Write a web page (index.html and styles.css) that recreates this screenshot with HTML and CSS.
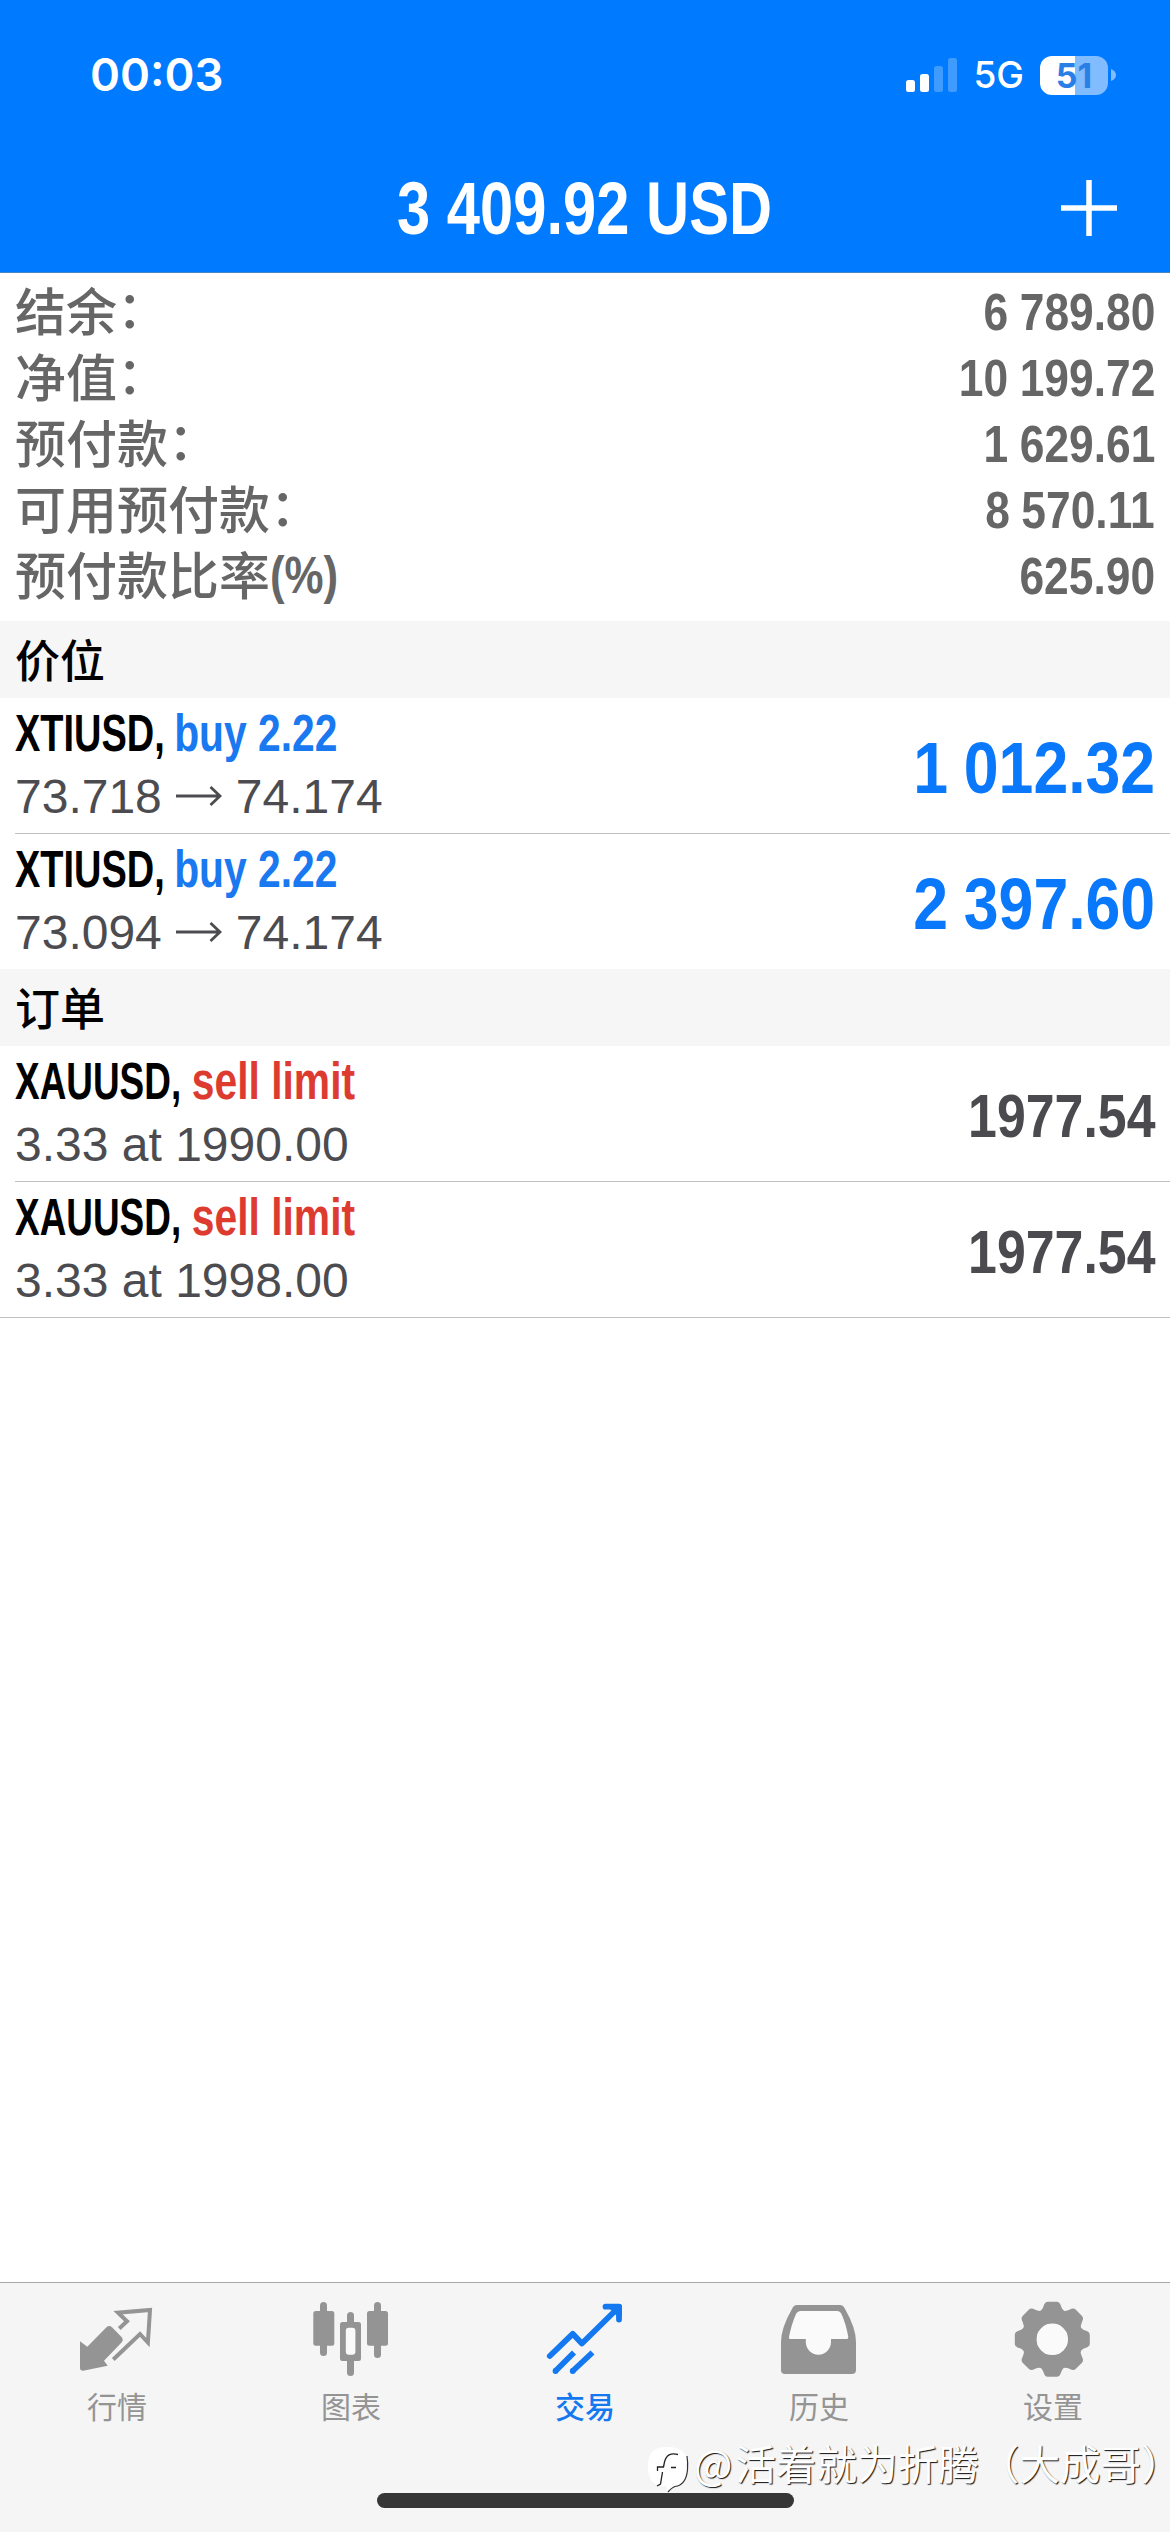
FILE: index.html
```html
<!DOCTYPE html>
<html lang="zh-CN">
<head>
<meta charset="utf-8">
<title>交易</title>
<link rel="stylesheet" href="styles.css">
</head>
<body>
<div class="app">
  <header class="header">
    <div class="status">
      <span class="time">00:03</span>
      <div class="status-icons">
        <svg class="signal" width="52" height="36" viewBox="0 0 52 36" fill="#fff">
          <rect x="0" y="23" width="9" height="12" rx="2.5"/>
          <rect x="14" y="17" width="9" height="18" rx="2.5"/>
          <rect x="28" y="9" width="9" height="26" rx="2.5" opacity=".25"/>
          <rect x="42" y="1" width="9" height="34" rx="2.5" opacity=".25"/>
        </svg>
        <span class="network">5G</span>
        <div class="battery"><span class="battery-level">51</span></div>
        <svg width="6" height="12" viewBox="0 0 6 12"><path d="M0 0Q5 2 5 6T0 12Z" fill="#80bcff"/></svg>
      </div>
    </div>
    <div class="titlebar">
      <h1 class="title">3 409.92 USD</h1>
      <svg class="add" width="56" height="56" viewBox="0 0 56 56"><path d="M28 0V56M0 28H56" stroke="#fff" stroke-width="5.5"/></svg>
    </div>
  </header>

  <main class="content">
    <dl class="summary">
      <div class="summary-row"><dt>结余<span class="colon">：</span></dt><dd>6 789.80</dd></div>
      <div class="summary-row"><dt>净值<span class="colon">：</span></dt><dd>10 199.72</dd></div>
      <div class="summary-row"><dt>预付款<span class="colon">：</span></dt><dd>1 629.61</dd></div>
      <div class="summary-row"><dt>可用预付款<span class="colon">：</span></dt><dd>8 570.11</dd></div>
      <div class="summary-row"><dt>预付款比率<span class="unit">(%)</span></dt><dd>625.90</dd></div>
    </dl>

    <h2 class="section">价位</h2>
    <div class="row">
      <div class="info">
        <div class="name"><span class="symbol oil">XTIUSD,</span><span class="buy">buy 2.22</span></div>
        <div class="detail">73.718<svg class="arrow" width="46" height="20" viewBox="0 0 46 20"><path d="M0 10H44M34.500 1L44 10L34.500 19" fill="none" stroke="#4c4c50" stroke-width="2.800"/></svg>74.174</div>
      </div>
      <div class="profit">1 012.32</div>
    </div>
    <div class="row">
      <div class="info">
        <div class="name"><span class="symbol oil">XTIUSD,</span><span class="buy">buy 2.22</span></div>
        <div class="detail">73.094<svg class="arrow" width="46" height="20" viewBox="0 0 46 20"><path d="M0 10H44M34.500 1L44 10L34.500 19" fill="none" stroke="#4c4c50" stroke-width="2.800"/></svg>74.174</div>
      </div>
      <div class="profit">2 397.60</div>
    </div>

    <h2 class="section">订单</h2>
    <div class="row">
      <div class="info">
        <div class="name"><span class="symbol gold">XAUUSD,</span><span class="sell">sell limit</span></div>
        <div class="detail">3.33 at 1990.00</div>
      </div>
      <div class="price">1977.54</div>
    </div>
    <div class="row">
      <div class="info">
        <div class="name"><span class="symbol gold">XAUUSD,</span><span class="sell">sell limit</span></div>
        <div class="detail">3.33 at 1998.00</div>
      </div>
      <div class="price">1977.54</div>
    </div>
    <div class="list-end"></div>
  </main>

  <nav class="tabs">
    <div class="tab">
      <svg width="84" height="84" viewBox="0 0 84 84" fill="currentColor">
        <path d="M5 43.300L12.300 48.700L31.500 29.200Q34.300 26.700 37 29.200L47 39.500Q48.500 41.500 47 44L29 62.700L32.700 67.700L8 72.700Q5 72.700 5 70Z"/>
        <path d="M44.300 30.500L52 23.300L43 14.700L75 12L72.900 44.500L65 36L38.300 61.500" fill="none" stroke="currentColor" stroke-width="4"/>
      </svg>
      <span>行情</span>
    </div>
    <div class="tab">
      <svg width="84" height="84" viewBox="0 0 84 84" fill="currentColor">
        <rect x="11" y="4" width="7" height="54" rx="3.500"/><rect x="4.300" y="13" width="21" height="34.700" rx="2.500"/>
        <rect x="65" y="4" width="7" height="56" rx="3.500"/><rect x="58" y="13" width="21" height="34.700" rx="2.500"/>
        <rect x="38" y="14" width="7" height="64" rx="3.500"/><rect x="31" y="24" width="21" height="39" rx="2.500"/>
        <rect x="36.800" y="29.700" width="9.600" height="27" rx="3" fill="#fafafa"/>
      </svg>
      <span>图表</span>
    </div>
    <div class="tab active">
      <svg width="84" height="84" viewBox="0 0 84 84" fill="none" stroke="currentColor" stroke-width="5.800" stroke-linejoin="round">
        <path d="M6.800 58L29.700 35.800L38.900 45.500L76 9" stroke-linecap="round"/>
        <path d="M62.500 8.700H76V21.500" stroke-linecap="round"/>
        <path d="M69 9H76V16Z" fill="currentColor"/>
        <path d="M12.500 73L31 54.500M29.700 73L49.500 54.500"/>
        <path d="M12.500 73h.1M29.700 73h.1" stroke-linecap="round"/>
      </svg>
      <span>交易</span>
    </div>
    <div class="tab">
      <svg width="84" height="84" viewBox="0 0 84 84">
        <path d="M20 7H63Q66 7 67.500 10Q79 30 79 44V72Q79 76 75 76H8Q4 76 4 72V44Q4 30 15.500 10Q17 7 20 7Z" fill="currentColor"/>
        <path d="M24 13H60Q63 13 64.500 16Q69 26 71.300 39Q71.300 41 70 41H54V44C54 51 48.500 56.700 41.400 56.700S28.800 51 28.800 44V41H13Q11.600 41 12 39Q14.500 26 19 16Q20.500 13 24 13Z" fill="#fafafa"/>
      </svg>
      <span>历史</span>
    </div>
    <div class="tab">
      <svg width="84" height="84" viewBox="0 0 84 84" fill="currentColor">
        <defs><path id="tooth" d="M-14 -27Q-10 -29 -8.800 -33Q-7.500 -37.500 -4.500 -37.500H4.500Q7.500 -37.500 8.800 -33Q10 -29 14 -27L8 -15H-8Z"/></defs>
        <g transform="translate(41.300 41.300)">
          <use href="#tooth"/><use href="#tooth" transform="rotate(45)"/><use href="#tooth" transform="rotate(90)"/><use href="#tooth" transform="rotate(135)"/>
          <use href="#tooth" transform="rotate(180)"/><use href="#tooth" transform="rotate(225)"/><use href="#tooth" transform="rotate(270)"/><use href="#tooth" transform="rotate(315)"/>
          <circle r="23" fill="none" stroke="currentColor" stroke-width="14"/>
          <circle r="15.700" fill="#fafafa"/>
        </g>
      </svg>
      <span>设置</span>
    </div>
  </nav>

  <div class="home-indicator"></div>
  <div class="watermark">
    <svg width="44" height="48" viewBox="0 0 44 48">
      <path d="M20 1C33 1 40 7 40 21S32 39 27 40L20 46L18 40C6 40 0 35 0 20S7 1 20 1Z" fill="#fff"/>
      <path d="M39 10Q40 16 39.500 24Q38 39 27 40.500Q24 41.500 20 46" fill="none" stroke="#333" stroke-width="1.200"/>
      <path d="M30 8.500Q19 5.500 16.500 16L15.500 21H9.500V25M14.500 26L12.500 38L9 40M23 21.500H28" fill="none" stroke="#222" stroke-width="1.300"/>
    </svg>
    <span class="author"><span class="at">@</span>活着就为折腾（大成哥<span class="closing">）</span></span>
  </div>
</div>
</body>
</html>
```
FILE: styles.css
```css
* { box-sizing: border-box; }

body {
  margin: 0;
  background: #fff;
  font-family: "Liberation Sans", "Noto Sans CJK SC", sans-serif;
}

.app {
  position: relative;
  display: flex;
  flex-direction: column;
  width: 1170px;
  height: 2532px;
  overflow: hidden;
}

h1, h2, dl, dt, dd { margin: 0; }

/* Header */
.header {
  height: 273px;
  background: #007aff;
  border-bottom: 1px solid #4a84c4;
  color: #fff;
}

.status {
  display: flex;
  justify-content: space-between;
  align-items: center;
  height: 148px;
  padding: 2px 53px 0 90px;
  font-family: Inter, sans-serif;
}

.time {
  font-size: 45.500px;
  font-weight: 600;
  line-height: 60px;
}

.status-icons {
  display: flex;
  align-items: center;
}

.network {
  margin: 0 16px 0 15px;
  font-size: 37px;
  font-weight: 500;
  line-height: 40px;
}

.battery {
  width: 68px;
  height: 39px;
  margin-right: 3px;
  border-radius: 12px;
  background: linear-gradient(90deg, #fff 35px, #80bcff 35px);
  color: #2a7fe6;
  text-align: center;
}

.battery-level {
  font-size: 34px;
  font-weight: 700;
  line-height: 39px;
}

.titlebar {
  display: grid;
  grid-template-columns: 1fr auto 1fr;
  align-items: center;
  height: 120px;
}

.title {
  grid-column: 2;
  font-size: 75px;
  line-height: 90px;
  white-space: nowrap;
  transform: scaleX(.796);
}

.add {
  justify-self: end;
  margin-right: 53px;
}

/* Account summary */
.summary {
  height: 348px;
  padding: 6px 15px 0 15px;
  color: #666;
}

.summary-row {
  display: flex;
  justify-content: space-between;
  height: 66px;
  line-height: 66px;
}

.summary-row dt {
  padding-top: 2px;
  font-size: 51px;
  font-weight: 500;
}

.summary-row dd {
  font-size: 52px;
  font-weight: 700;
  word-spacing: -1px;
  transform: scaleX(.853);
  transform-origin: right;
}

.colon {
  display: inline-block;
  line-height: 1;
  transform: translateY(-3px);
}

.unit {
  display: inline-block;
  font-size: 51px;
  font-weight: 700;
  line-height: 1;
  transform: translateY(-2px) scaleX(.86);
  transform-origin: left;
}

/* Lists */
.section {
  height: 77px;
  padding-left: 15px;
  background: #f6f6f6;
  color: #000;
  font-family: "Noto Sans CJK SC", sans-serif;
  font-size: 45px;
  font-weight: 500;
  line-height: 75px;
}

.row {
  display: flex;
  justify-content: space-between;
  align-items: center;
  height: 135px;
  margin-left: 15px;
  padding-right: 15px;
}

.row + .row {
  height: 136px;
  border-top: 1px solid #c0c0c3;
}

.list-end { border-top: 1px solid #c0c0c3; }

.name {
  height: 63px;
  color: #000;
  font-size: 51px;
  font-weight: 700;
  line-height: 61px;
  white-space: nowrap;
  transform: scaleX(.8);
  transform-origin: left;
}

.symbol {
  display: inline-block;
  transform-origin: left;
}

.oil {
  width: 199px;
  transform: scaleX(.93);
}

.gold {
  width: 221px;
  transform: scaleX(.905);
}

.buy { color: #1a78f0; }
.sell { color: #de3b30; }

.detail {
  height: 63px;
  color: #4c4c50;
  font-size: 48px;
  line-height: 61px;
  white-space: nowrap;
}

.arrow { margin: 0 14px 7px; vertical-align: baseline; }

.profit, .price {
  font-weight: 700;
  white-space: nowrap;
  transform-origin: right;
}

.profit {
  padding-top: 3px;
  color: #0a78fb;
  font-size: 73px;
  word-spacing: -2px;
  transform: scaleX(.857);
}

.price {
  padding-top: 4px;
  color: #4a4a4f;
  font-size: 61px;
  transform: scaleX(.85);
}

/* Tab bar */
.tabs {
  display: grid;
  grid-template-columns: repeat(5, 1fr);
  height: 250px;
  margin-top: auto;
  padding-top: 15px;
  border-top: 1px solid #a8a8aa;
  background: #f5f5f5;
}

.tab {
  display: flex;
  flex-direction: column;
  align-items: center;
  color: #949494;
  font-family: "Noto Sans CJK SC", sans-serif;
  font-size: 30px;
  line-height: 47px;
}

.active {
  color: #1478f0;
  font-weight: 500;
}

/* Overlays */
.home-indicator {
  position: absolute;
  left: 377px;
  top: 2493px;
  width: 417px;
  height: 15px;
  border-radius: 8px;
  background: #363636;
}

.watermark {
  position: absolute;
  left: 648px;
  top: 2446px;
  display: flex;
  align-items: flex-start;
  gap: 2px;
  color: #fff;
  font-family: "Noto Sans CJK SC", sans-serif;
  font-size: 40.600px;
  line-height: 33px;
  white-space: nowrap;
  text-shadow: 1px 1px 1px #111;
}

.at { letter-spacing: 3px; }
.closing { font-feature-settings: "halt"; }
```
